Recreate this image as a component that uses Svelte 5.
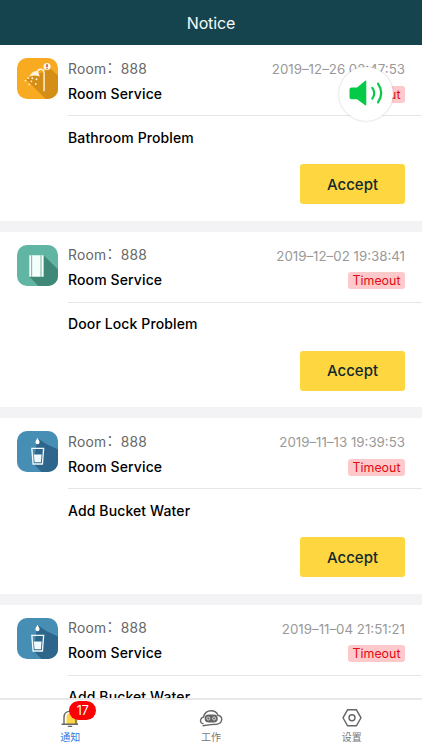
<script>
  let notices = $state([
    { id: 1, icon: 'shower', room: '888', time: '2019–12–26 02:47:53', type: 'Room Service', content: 'Bathroom Problem' },
    { id: 2, icon: 'door', room: '888', time: '2019–12–02 19:38:41', type: 'Room Service', content: 'Door Lock Problem' },
    { id: 3, icon: 'water', room: '888', time: '2019–11–13 19:39:53', type: 'Room Service', content: 'Add Bucket Water' },
    { id: 4, icon: 'water', room: '888', time: '2019–11–04 21:51:21', type: 'Room Service', content: 'Add Bucket Water' }
  ]);

  const tabs = [
    { id: 'notice', label: '通知' },
    { id: 'work', label: '工作' },
    { id: 'settings', label: '设置' }
  ];

  let activeTab = $state('notice');
  let unread = $state(17);

  function accept(notice) {
    notices = notices.filter((n) => n.id !== notice.id);
    unread = Math.max(0, unread - 1);
  }
</script>

<div class="app">
  <header>
    <h1>Notice</h1>
  </header>

  <main>
    {#each notices as notice (notice.id)}
      <article>
        <svg class="type-icon {notice.icon}" viewBox="0 0 40 40">
          {#if notice.icon === 'shower'}
            <path class="shade" d="M9 21L28 40H40V17L30 8L26 14L20 15Z" />
            <path d="M26.4 32.5V14.5Q26.4 11 23.3 11Q20.5 11 19.5 13.7" fill="none" stroke="#fff3dc" stroke-width="1.4" />
            <path d="M12 17.8Q15 12.2 20.3 12.6L22.3 18Q17 16.4 12 17.8Z" fill="#fff3dc" />
            <g fill="#fff3dc">
              <circle cx="11" cy="19.7" r="0.9" /><circle cx="15" cy="19.8" r="0.9" /><circle cx="19" cy="20.7" r="0.9" />
              <circle cx="8.2" cy="22" r="0.9" /><circle cx="14" cy="22.8" r="0.9" /><circle cx="12" cy="25.8" r="0.9" />
              <circle cx="18.3" cy="25.3" r="0.9" />
            </g>
            <circle cx="29.3" cy="8.4" r="3.5" fill="#fff6ea" />
            <path d="M29.3 6V9M29.3 10V11" stroke="#c33618" stroke-width="1.3" />
          {:else if notice.icon === 'door'}
            <path class="shade" d="M12 31L21 40H40V24L26 10Z" />
            <path d="M12 10H26V31H12Z" fill="#f5fffb" />
            <path d="M14.3 10V31M23.4 10V31" stroke="#53a48e" stroke-width="0.8" />
          {:else}
            <path class="shade" d="M16 32L24 40H40V18L29 13L20 7Z" />
            <path d="M20 6.5C19 8.6 18 9.5 18 11A2 2 0 0 0 22 11C22 9.5 21 8.6 20 6.5Z" fill="#fff" />
            <path d="M14.5 17H26L24.8 32.2H15.7Z" fill="none" stroke="#f1fbff" stroke-width="1.3" />
            <path d="M16.5 23H24L23.4 30.4H17.1Z" fill="#f1fbff" />
          {/if}
        </svg>

        <div class="body">
          <div class="summary">
            <div class="row">
              <span class="room">Room<span class="colon">：</span>{notice.room}</span>
              <time>{notice.time}</time>
            </div>
            <div class="row">
              <span class="type">{notice.type}</span>
              <span class="timeout">Timeout</span>
            </div>
          </div>
          <p>{notice.content}</p>
          <button class="accept" onclick={() => accept(notice)}>Accept</button>
        </div>
      </article>
    {/each}
  </main>

  <button class="sound" aria-label="Sound">
    <svg viewBox="0 0 54 54">
      <path d="M12.5 20.5H18L26.5 13.6Q27.3 13.4 27.3 14.5V37.5Q27.3 38.6 26.5 38.4L18 32.2H12.5Q10.5 32.2 10.5 30.2V22.5Q10.5 20.5 12.5 20.5Z" />
      <path class="wave" d="M33.3 20.8Q37.2 26.2 33.3 31.6M39 16.6Q45.4 26 39 35.4" />
    </svg>
  </button>

  <nav>
    {#each tabs as tab (tab.id)}
      <button class="tab" class:active={activeTab === tab.id} onclick={() => (activeTab = tab.id)}>
        <span class="tab-icon">
          {#if tab.id === 'notice'}
            <svg viewBox="0 0 24 20">
              <path d="M8.5 16V10Q8.5 5 13 5Q19.5 5 19.5 10V16Z" fill="#fdd544" stroke="none" />
              <path d="M6 16V9.5Q6 3.4 12 3.4Q18 3.4 18 9.5V16M3.6 16.2H20M9.8 18.4H14.2M12 1.5V3.4" />
            </svg>
            {#if unread > 0}
              <span class="badge">{unread}</span>
            {/if}
          {:else if tab.id === 'work'}
            <svg viewBox="0 0 24 20">
              <path d="M4.4 15.7Q1 15 1.6 12Q2.1 9.6 4.5 9Q6 2.8 12 2.8Q17.3 2.8 19 7.3Q22.9 8.2 22.7 11.7Q22.3 15.5 17.5 16.2L12 16.6L3.6 17.7" />
              <path d="M9.7 6.4H14.7A4.1 4.1 0 0 1 14.7 14.6H9.7A4.1 4.1 0 0 1 9.7 6.4Z" fill="#656565" stroke="none" />
              <circle cx="9.3" cy="10.5" r="1.5" fill="#656565" stroke="#ddd" stroke-width="1" />
              <circle cx="15.1" cy="10.5" r="1.5" fill="#656565" stroke="#ddd" stroke-width="1" />
            </svg>
          {:else}
            <svg viewBox="0 0 24 20">
              <path d="M7.6 1.8H16.4L21 9.8L16.4 17.8H7.6L3 9.8Z" />
              <circle cx="12" cy="9.8" r="3" />
            </svg>
          {/if}
        </span>
        <span class="tab-label">{tab.label}</span>
      </button>
    {/each}
  </nav>
</div>

<style>
  :global(body) {
    margin: 0;
    overflow: hidden;
  }

  .app {
    position: relative;
    display: flex;
    flex-direction: column;
    height: 750px;
    overflow: hidden;
    background: #fff;
    font-family: Inter, 'Noto Sans CJK SC', sans-serif;
  }

  header {
    flex: none;
    display: flex;
    align-items: center;
    justify-content: center;
    height: 45px;
    background: #16444e;
  }

  h1 {
    margin: 0;
    color: #f4fafa;
    font-size: 16px;
    font-weight: 400;
    letter-spacing: -0.1px;
  }

  main {
    flex: 1;
    min-height: 0;
    overflow: hidden;
    background: #f3f2f5;
  }

  article {
    display: flex;
    gap: 11px;
    box-sizing: border-box;
    height: 175.6px;
    margin-bottom: 11px;
    padding: 13px 0 0 16.5px;
    background: #fff;
  }

  .type-icon {
    flex: none;
    width: 41px;
    height: 41px;
    border-radius: 10px;
  }

  .shower {
    background: #f8aa20;
  }

  .shower .shade {
    fill: #d48d15;
  }

  .door {
    background: #60b6a2;
  }

  .door .shade {
    fill: #3f8776;
  }

  .water {
    background: #478eb5;
  }

  .water .shade {
    fill: #2d668a;
  }

  .body {
    flex: 1;
    display: flex;
    flex-direction: column;
    margin-left: -0.5px;
  }

  .summary {
    height: 57px;
    border-bottom: 1px solid #e6e6e6;
  }

  .row {
    display: flex;
    align-items: center;
    justify-content: space-between;
    height: 22px;
    padding-right: 17px;
    white-space: nowrap;
  }

  .row + .row {
    padding-top: 3px;
  }

  .room {
    color: #666;
    font-size: 13.8px;
    line-height: 20px;
    letter-spacing: 0.3px;
    margin-top: -1px;
  }

  .colon {
    position: relative;
    top: -2px;
  }

  time {
    color: #999;
    font-size: 13.3px;
    line-height: 20px;
  }

  .type,
  p {
    color: #000;
    font-size: 14px;
    font-weight: 500;
    letter-spacing: 0.12px;
  }

  .type {
    line-height: 20px;
    margin-top: -1px;
  }

  .timeout {
    width: 57px;
    height: 17px;
    border-radius: 3px;
    background: #fdc9cb;
    color: #e10a12;
    font-size: 12.4px;
    line-height: 17px;
    text-align: center;
  }

  p {
    margin: 10.5px 0 0;
    line-height: 22px;
  }

  .accept {
    align-self: flex-end;
    width: 105px;
    height: 40px;
    margin: 15.5px 17px 0 0;
    padding: 0;
    border: none;
    border-radius: 3px;
    background: #fed640;
    color: #10292c;
    font: 500 15px Inter, sans-serif;
  }

  .sound {
    position: absolute;
    top: 67px;
    left: 339px;
    width: 54px;
    height: 54px;
    padding: 0;
    border: none;
    border-radius: 50%;
    background: #fff;
    box-shadow: 0 0 2px rgba(0, 0, 0, 0.25);
  }

  .sound svg {
    display: block;
    fill: #04ca47;
  }

  .sound .wave {
    fill: none;
    stroke: #04ca47;
    stroke-width: 2.2;
    stroke-linecap: round;
  }

  nav {
    flex: none;
    display: flex;
    box-sizing: border-box;
    height: 52px;
    border-top: 2px solid #e8e8e8;
    background: #fff;
  }

  .tab {
    flex: 1;
    display: flex;
    flex-direction: column;
    align-items: center;
    padding: 8px 0 0;
    border: none;
    background: none;
    color: #777;
    font-family: 'Noto Sans CJK SC', sans-serif;
  }

  .tab.active {
    color: #2c7be0;
  }

  .tab-icon {
    position: relative;
    width: 24px;
    height: 20px;
  }

  .tab-icon svg {
    display: block;
    fill: none;
    stroke: #656565;
    stroke-width: 1.4;
  }

  .tab-label {
    font-size: 10px;
    line-height: 18px;
  }

  .badge {
    position: absolute;
    top: -7px;
    left: 11px;
    width: 27px;
    height: 19px;
    border-radius: 10px;
    background: #fb0204;
    color: #fff;
    font: 12.5px/19px Inter, sans-serif;
    text-align: center;
  }
</style>
